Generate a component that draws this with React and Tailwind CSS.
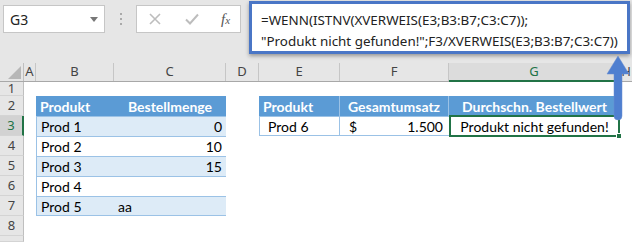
import React from 'react'

const cellFont = { fontFamily: 'Lato, "Open Sans", sans-serif' }

const cols = [
  { key: 'A', w: 'w-[12px]' },
  { key: 'B', w: 'w-[78px]' },
  { key: 'C', w: 'w-[112px]' },
  { key: 'D', w: 'w-[33px]' },
  { key: 'E', w: 'w-[81px]' },
  { key: 'F', w: 'w-[109px]' },
  { key: 'G', w: 'w-[171px]' },
  { key: 'H', w: 'flex-1' }
]

const t1 = [
  ['Prod 1', '0', '', 'bg-[#ddebf7]'],
  ['Prod 2', '10', '', 'bg-white'],
  ['Prod 3', '15', '', 'bg-[#ddebf7]'],
  ['Prod 4', '', '', 'bg-white'],
  ['Prod 5', '', 'aa', 'bg-[#ddebf7]']
]

function RowHead({ n, h, active }) {
  return (
    <div
      className={`w-[24px] shrink-0 flex items-center justify-center text-[13px] border-b border-[#d4d4d4] ${h} ${active ? 'bg-[#d2d2d2] text-[#217346] border-r-2 border-r-[#217346]' : 'bg-[#e6e6e6] text-[#444] border-r border-r-[#bfbfbf]'}`}
      style={{ fontFamily: '"Noto Sans", sans-serif' }}
    >
      {n}
    </div>
  )
}

function FormulaBar() {
  return (
    <div className="h-[63px] flex items-start">
      <div className="ml-[3px] mt-[5px] w-[102px] h-[28px] bg-white border border-[#c6c6c6] flex items-center justify-between pl-[6px] pr-[6px]" style={{ fontFamily: '"Noto Sans", sans-serif' }}>
        <span className="text-[14px] text-[#222]">G3</span>
        <span className="w-0 h-0 border-l-[4px] border-r-[4px] border-t-[5px] border-l-transparent border-r-transparent border-t-[#777]" />
      </div>
      <div className="w-[31px] mt-[13px] flex flex-col items-center gap-[3px]">
        <span className="w-[2px] h-[2px] bg-[#aaa]" />
        <span className="w-[2px] h-[2px] bg-[#aaa]" />
        <span className="w-[2px] h-[2px] bg-[#aaa]" />
      </div>
      <div className="mt-[5px] w-[105px] h-[28px] bg-white border border-[#c6c6c6] flex items-center">
        <svg width="12" height="12" viewBox="0 0 12 12" className="ml-[12px]">
          <path d="M1 1 L11 11 M11 1 L1 11" stroke="#bdbdbd" strokeWidth="1.6" fill="none" />
        </svg>
        <svg width="14" height="12" viewBox="0 0 14 12" className="ml-[24px]">
          <path d="M1 6.5 L5 10.5 L13 1.5" stroke="#bdbdbd" strokeWidth="2" fill="none" />
        </svg>
        <span className="ml-[22px] text-[15px] text-[#555] italic" style={{ fontFamily: '"Liberation Serif", serif' }}>
          f<span className="text-[11px]">x</span>
        </span>
      </div>
      <div
        className="ml-[8px] mt-[1px] w-[381px] h-[53px] bg-white border-[3px] border-[#4a76c6] shadow-[0_2px_4px_rgba(0,0,0,0.35)] pl-[9px] pt-[6px] text-[13.4px] leading-[21px] text-[#222] whitespace-nowrap"
        style={{ fontFamily: '"Noto Sans", sans-serif' }}
      >
        <div>=WENN(ISTNV(XVERWEIS(E3;B3:B7;C3:C7));</div>
        <div>"Produkt nicht gefunden!";F3/XVERWEIS(E3;B3:B7;C3:C7))</div>
      </div>
    </div>
  )
}

function ColHeader() {
  return (
    <div className="flex h-[19px] border-b border-[#a8a8a8]" style={{ fontFamily: '"Noto Sans", sans-serif' }}>
      <div className="w-[24px] shrink-0 bg-[#e6e6e6] border-r border-[#bfbfbf] relative">
        <svg width="13" height="13" viewBox="0 0 13 13" className="absolute right-[2px] bottom-[2px]">
          <path d="M13 0 L13 13 L0 13 Z" fill="#b7b7b7" />
        </svg>
      </div>
      {cols.map(c => (
        <div
          key={c.key}
          className={`${c.w} shrink-0 flex items-center justify-center text-[13px] ${c.key === 'G' ? 'bg-[#dcdcdc] text-[#217346] border-b-2 border-[#217346] -mb-px' : 'bg-[#e6e6e6] text-[#444]'} ${c.key !== 'H' ? 'border-r border-r-[#c6c6c6]' : ''}`}
        >
          {c.key}
        </div>
      ))}
    </div>
  )
}

export default function App() {
  return (
    <div className="w-[632px] h-[242px] bg-[#e6e6e6] relative overflow-hidden">
      <FormulaBar />
      <ColHeader />

      <div className="text-[14px] text-black" style={cellFont}>
        {/* row 1 */}
        <div className="flex h-[14px]">
          <RowHead n="1" h="h-[14px]" />
          <div className="flex-1 bg-white" />
        </div>

        {/* row 2: table headers */}
        <div className="flex h-[20px]">
          <RowHead n="2" h="h-[20px]" />
          <div className="flex-1 bg-white flex">
            <div className="w-[12px]" />
            <div className="w-[78px] bg-[#5b9bd5] text-white font-bold pl-[4px] flex items-center">Produkt</div>
            <div className="w-[112px] bg-[#5b9bd5] text-white font-bold flex items-center justify-center">Bestellmenge</div>
            <div className="w-[33px]" />
            <div className="w-[81px] bg-[#5b9bd5] text-white font-bold pl-[4px] flex items-center border-r border-[#9bc2e6]">Produkt</div>
            <div className="w-[109px] bg-[#5b9bd5] text-white font-bold flex items-center justify-center border-r border-[#9bc2e6]">Gesamtumsatz</div>
            <div className="w-[171px] bg-[#5b9bd5] text-white font-bold flex items-center justify-center">Durchschn. Bestellwert</div>
          </div>
        </div>

        {t1.map((r, i) => (
          <div key={i} className="flex h-[20px]">
            <RowHead n={String(i + 3)} h="h-[20px]" active={i === 0} />
            <div className="flex-1 bg-white flex">
              <div className="w-[12px]" />
              <div className={`w-[78px] ${r[3]} border-t border-l border-[#9bc2e6] pl-[4px] flex items-center ${i === 4 ? 'border-b' : ''}`}>{r[0]}</div>
              <div className={`w-[112px] ${r[3]} border-t border-[#9bc2e6] flex items-center ${r[2] ? 'pl-[4px]' : 'justify-end pr-[4px]'} ${i === 4 ? 'border-b' : ''}`}>
                {r[2] || r[1]}
              </div>
              <div className="w-[33px]" />
              {i === 0 && (
                <>
                  <div className="w-[81px] border-t border-l border-b border-r border-[#9bc2e6] pl-[8px] flex items-center">Prod 6</div>
                  <div className="w-[109px] border-t border-b border-[#9bc2e6] pl-[9px] pr-[6px] flex items-center justify-between">
                    <span>$</span>
                    <span>1.500</span>
                  </div>
                  <div className="w-[171px] border-2 border-[#217346] flex items-center justify-center relative -mt-px h-[22px]">
                    Produkt nicht gefunden!
                    <span className="absolute -right-[4px] -bottom-[4px] w-[6px] h-[6px] bg-[#217346] border border-white" />
                  </div>
                </>
              )}
            </div>
          </div>
        ))}

        {/* row 8 and 9 */}
        <div className="flex h-[20px]">
          <RowHead n="8" h="h-[20px]" />
          <div className="flex-1 bg-white" />
        </div>
        <div className="flex h-[6px]">
          <RowHead n="" h="h-[6px]" />
          <div className="flex-1 bg-white" />
        </div>
      </div>

      {/* callout arrow from the formula box to G3 */}
      <svg width="28" height="70" viewBox="0 0 28 70" className="absolute left-[604px] top-[54px]">
        <path d="M14 2 L25 20 L18 20 L18 62 Q18 66 14 66 Q10 66 10 62 L10 20 L3 20 Z" fill="#4f7fd0" stroke="#6b8fd0" strokeWidth="0.5" />
      </svg>
    </div>
  )
}
